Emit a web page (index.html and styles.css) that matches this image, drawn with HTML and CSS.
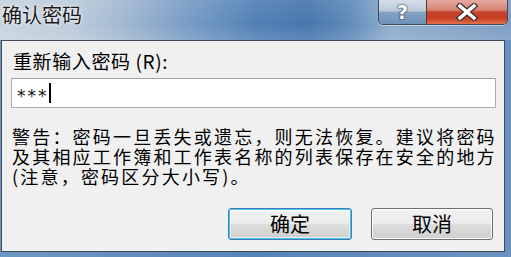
FILE: index.html
```html
<!DOCTYPE html>
<html lang="zh-CN">
<head>
<meta charset="utf-8">
<title>确认密码</title>
<link rel="stylesheet" href="styles.css">
</head>
<body>
<div class="window">
  <div class="titlebar">
    <span class="title">确认密码</span>
    <div class="caption">
      <div class="cap cap-help"><span class="qmark">?</span></div>
      <div class="cap cap-close">
        <svg width="24" height="18" viewBox="0 0 24 18">
          <path d="M5 3 L19 15 M19 3 L5 15" stroke="#3a2a2a" stroke-width="6" stroke-linecap="square" fill="none"/>
          <path d="M5 3 L19 15 M19 3 L5 15" stroke="#ffffff" stroke-width="3.6" stroke-linecap="square" fill="none"/>
        </svg>
      </div>
    </div>
  </div>
  <div class="panel">
    <div class="label">重新输入密码 (R):</div>
    <div class="input"><span class="stars">***</span><span class="caret"></span></div>
    <div class="warning">警告：密码一旦丢失或遗忘，则无法恢复。建议将密码<br>及其相应工作簿和工作表名称的列表保存在安全的地方<br>(注意，密码区分大小写)。</div>
    <div class="buttons">
      <div class="button button-default">确定</div>
      <div class="button">取消</div>
    </div>
  </div>
</div>
</body>
</html>
```

FILE: styles.css
```css
html, body {
  margin: 0;
  padding: 0;
}

body {
  width: 511px;
  height: 257px;
  overflow: hidden;
  font-family: "Noto Sans CJK SC", "Liberation Sans", sans-serif;
  color: #000;
}

.window {
  width: 511px;
  height: 257px;
  display: flex;
  flex-direction: column;
  background: linear-gradient(90deg, #6f97c3 0%, #5784b8 50%, #6a93c0 100%);
}

.titlebar {
  height: 40px;
  flex: none;
  display: flex;
  justify-content: space-between;
  align-items: flex-start;
  background:
    linear-gradient(180deg, rgba(255,255,255,0.08) 0%, rgba(255,255,255,0) 60%, rgba(255,255,255,0.12) 100%),
    linear-gradient(90deg, #c8d4df 0%, #bccbda 14%, #a3b9d0 24%, #7b9ec5 36%, #5281b6 50%, #4977ae 60%, #5d89b9 68%, #8eadcc 76%, #86a5c7 88%, #7c9dc3 100%);
}

.title {
  font-size: 20px;
  line-height: 20px;
  padding: 5px 0 0 2px;
  color: #1a1a1a;
  text-shadow: 0 0 4px #ffffff, 0 0 2px #eef3f8;
}

.caption {
  display: flex;
  margin-right: 3px;
  height: 24px;
  border: 1px solid #3e4d60;
  border-top: none;
  border-radius: 0 0 5px 5px;
  overflow: hidden;
  box-shadow: 0 1px 0 rgba(255,255,255,0.45);
}

.cap {
  height: 24px;
  display: flex;
  align-items: center;
  justify-content: center;
}

.cap-help {
  width: 47px;
  background: linear-gradient(180deg, #d5dee8 0%, #bccbdb 45%, #86a3c4 52%, #6f90b9 100%);
}

.qmark {
  font-family: "DejaVu Sans", sans-serif;
  font-weight: bold;
  font-size: 19px;
  line-height: 20px;
  color: #ffffff;
  text-shadow: 0 0 2px #2c3b4e, 0 0 1px #2c3b4e, 0 0 1px #2c3b4e;
}

.cap-close {
  width: 80px;
  border-left: 1px solid #4c3a3a;
  background: linear-gradient(180deg, #e6aaa0 0%, #d88576 40%, #c5422b 52%, #c73d22 75%, #e0704c 100%);
}

.panel {
  margin: 0 6px 0 1px;
  height: 212px;
  flex: none;
  box-sizing: border-box;
  border: 1px solid #3f4b59;
  background: #f0f0f0;
  padding: 10px 10px 0 9px;
  display: flex;
  flex-direction: column;
}

.label {
  margin-left: 2px;
  font-size: 19px;
  line-height: 20px;
  letter-spacing: 0.6px;
  white-space: nowrap;
}

.input {
  margin-top: 7px;
  width: 485px;
  height: 30px;
  box-sizing: border-box;
  border: 1px solid #a9b0b8;
  border-top-color: #9aa1aa;
  background: #ffffff;
  display: flex;
  align-items: center;
  padding-left: 5px;
}

.stars {
  font-family: "DejaVu Sans", sans-serif;
  font-size: 17px;
  line-height: 17px;
  padding-top: 6px;
  letter-spacing: 2px;
  color: #111;
}

.caret {
  width: 2px;
  height: 20px;
  background: #000;
  margin-left: 0;
}

.warning {
  margin: 18px 0 0 1px;
  font-size: 18px;
  line-height: 20px;
  letter-spacing: 2.2px;
  white-space: nowrap;
}

.buttons {
  margin-top: 22px;
  margin-right: 1px;
  display: flex;
  justify-content: flex-end;
  gap: 19px;
}

.button {
  width: 122px;
  height: 32px;
  box-sizing: border-box;
  border: 1px solid #707070;
  border-radius: 3px;
  background: linear-gradient(180deg, #f3f3f3 0%, #ebebeb 48%, #dddddd 52%, #cfcfcf 100%);
  box-shadow: inset 0 0 0 1px rgba(255,255,255,0.8);
  display: flex;
  align-items: center;
  justify-content: center;
  font-size: 20px;
  line-height: 20px;
}

.button-default {
  width: 124px;
  border: 1px solid #3c7fb1;
  box-shadow: inset 0 0 0 1px #49c4f0, inset 0 0 0 2px rgba(255,255,255,0.6);
}
```
